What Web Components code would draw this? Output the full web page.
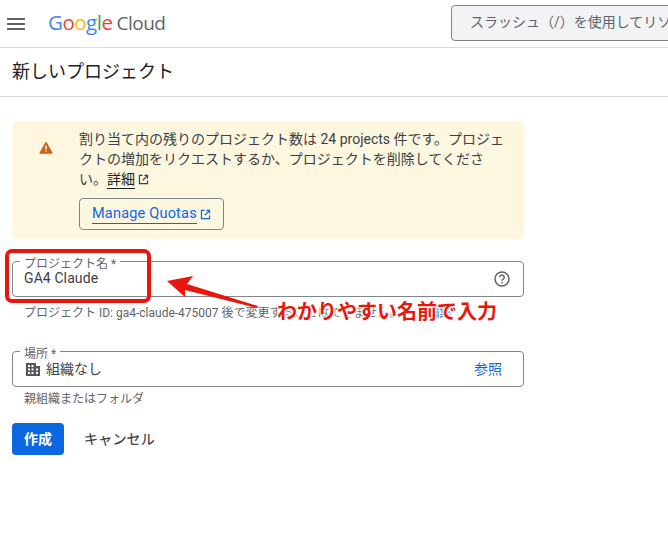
<!DOCTYPE html>
<html lang="ja">
<head>
<meta charset="utf-8">
<title>新しいプロジェクト</title>
<style>
  html, body { margin: 0; padding: 0; background: #fff; }
  body { width: 668px; height: 557px; overflow: hidden; position: relative; font-family: Roboto, "Noto Sans CJK JP", sans-serif; }
</style>
</head>
<body>
<gc-header></gc-header>
<gc-title>新しいプロジェクト</gc-title>
<gc-form>
  <gc-banner></gc-banner>
  <gc-field label="プロジェクト名 *" value="GA4 Claude" helper="プロジェクト ID: ga4-claude-475007 後で変更することはできません。" link="編集" kind="help"></gc-field>
  <gc-field label="場所 *" value="組織なし" helper="親組織またはフォルダ" kind="browse"></gc-field>
  <gc-actions></gc-actions>
</gc-form>
<gc-annotation></gc-annotation>

<script>
// 上部バー
class GcHeader extends HTMLElement {
  constructor() {
    super();
    this.attachShadow({ mode: 'open' });
    this.shadowRoot.innerHTML = `
      <style>
        :host { display: flex; align-items: center; height: 47px; border-bottom: 1px solid #dadce0; overflow: hidden; }
        .menu { flex: 0 0 18px; height: 12px; margin-left: 7px; display: flex; flex-direction: column; justify-content: space-between; }
        .menu i { display: block; height: 2px; background: #5f6368; }
        .logo { margin: 0 0 3px 23px; width: 403px; font: 500 20.5px/24px "Open Sans", sans-serif; letter-spacing: -.5px; white-space: nowrap; }
        .logo .cloud { font: 400 19px/24px "Open Sans", sans-serif; color: #5f6368; letter-spacing: -.5px; margin-left: 4px; }
        .search { flex: 0 0 auto; width: 300px; height: 36px; margin: 0 -90px 1px 0; box-sizing: border-box; border: 1px solid #80868b; border-radius: 4px 0 0 4px; background: #f1f3f4; padding-left: 18px; font: 14px/33px Roboto, "Noto Sans CJK JP", sans-serif; color: #5f6368; white-space: nowrap; }
      </style>
      <div class="menu"><i></i><i></i><i></i></div>
      <div class="logo"><span style="color:#4285f4">G</span><span style="color:#ea4335">o</span><span style="color:#fbbc04">o</span><span style="color:#4285f4">g</span><span style="color:#34a853">l</span><span style="color:#ea4335">e</span><span class="cloud">Cloud</span></div>
      <div class="search">スラッシュ（/）を使用してリソース</div>
    `;
  }
}
customElements.define('gc-header', GcHeader);

// ページタイトル
class GcTitle extends HTMLElement {
  constructor() {
    super();
    this.attachShadow({ mode: 'open' });
    this.shadowRoot.innerHTML = `
      <style>
        :host { display: block; height: 49px; box-sizing: border-box; padding-left: 12px; border-bottom: 1px solid #dadce0; font: 400 18px/47px Roboto, "Noto Sans CJK JP", sans-serif; color: #202124; }
      </style>
      <slot></slot>
    `;
  }
}
customElements.define('gc-title', GcTitle);

class GcForm extends HTMLElement {
  constructor() {
    super();
    this.attachShadow({ mode: 'open' });
    this.shadowRoot.innerHTML = `
      <style>
        :host { display: flex; flex-direction: column; width: 512px; margin-left: 12px; padding-top: 24px; }
      </style>
      <slot></slot>
    `;
  }
}
customElements.define('gc-form', GcForm);

const EXT_ICON = (color) => `<svg width="11" height="11" viewBox="0 0 12 12" fill="none" stroke="${color}" stroke-width="1.3"><path d="M5 1.6H1.6v8.8h8.8V7"/><path d="M7 1.6h3.4V5M10.2 1.8 5.2 6.8"/></svg>`;

// 割り当ての警告
class GcBanner extends HTMLElement {
  constructor() {
    super();
    this.attachShadow({ mode: 'open' });
    this.shadowRoot.innerHTML = `
      <style>
        :host { display: flex; height: 118px; box-sizing: border-box; background: #fef7e0; border-radius: 4px; padding: 8px 19px 0 27px; font: 14px/20px Roboto, "Noto Sans CJK JP", sans-serif; color: #3c4043; }
        .icon { flex: 0 0 14px; height: 13px; margin: 12px 26px 0 0; }
        .body { flex: 1; min-width: 0; }
        .link { color: #202124; border-bottom: 1px solid #202124; padding-bottom: 1px; }
        .text svg { vertical-align: -1px; margin-left: 3px; }
        .btn { display: inline-flex; align-items: center; gap: 3px; height: 32px; box-sizing: border-box; margin-top: 9px; padding: 0 12px; border: 1px solid #80868b; border-radius: 4px; font: 400 14.5px/20px Roboto, sans-serif; letter-spacing: .2px; color: #0b67e0; }
        .btn span { border-bottom: 1px solid #0b67e0; line-height: 18px; }
      </style>
      <svg class="icon" viewBox="0 0 14 13"><path d="M7 1 13.2 12.2H.8Z" fill="#c5651b" stroke="#c5651b" stroke-width="1" stroke-linejoin="round"/><path d="M6.3 4.6h1.4v4H6.3zM6.3 9.4h1.4v1.4H6.3z" fill="#fef7e0"/></svg>
      <div class="body">
        <div class="text">割り当て内の残りのプロジェクト数は 24 projects 件です。プロジェクトの増加をリクエストするか、プロジェクトを削除してください。<span class="link">詳細</span>${EXT_ICON('#3c4043')}</div>
        <div class="btn"><span>Manage Quotas</span>${EXT_ICON('#0b67e0')}</div>
      </div>
    `;
  }
}
customElements.define('gc-banner', GcBanner);

// 輪郭付きの入力欄
class GcField extends HTMLElement {
  constructor() {
    super();
    this.attachShadow({ mode: 'open' });
  }
  connectedCallback() {
    const kind = this.getAttribute('kind');
    const building = `<svg width="14" height="13" viewBox="0 0 14 13" fill="#54585c"><path fill-rule="evenodd" d="M0 0h10v3h4v10H0ZM2 2v2h2V2Zm3.500 0v2h2V2ZM2 5.500v2h2v-2Zm3.500 0v2h2v-2Zm4.500 0v2h2v-2ZM2 9v2h2V9Zm3.500 0v2h2V9Zm4.500 0v2h2V9Z"/></svg>`;
    const help = `<svg width="16" height="16" viewBox="0 0 16 16" fill="none" stroke="#5f6368" stroke-width="1.5"><circle cx="8" cy="8" r="7"/><path d="M5.8 6.300a2.200 2.200 0 1 1 3.400 1.800c-.8.5-1.200 1-1.200 1.700"/><path d="M8 11v1.500"/></svg>`;
    this.shadowRoot.innerHTML = `
      <style>
        :host { display: block; margin-top: 22px; }
        :host([kind="browse"]) { margin-top: 30px; }
        .box { position: relative; display: flex; align-items: center; height: 36px; box-sizing: border-box; border: 1px solid #80868b; border-radius: 4px; padding: 0 13px 0 11px; font: 14px/20px Roboto, "Noto Sans CJK JP", sans-serif; color: #3c4043; }
        :host([kind="help"]) .val { margin-top: -2px; letter-spacing: .1px; }
        :host([kind="browse"]) .box { padding-left: 13px; }
        .box svg { flex: none; }
        .val { flex: 1; }
        :host([kind="browse"]) .val { margin-left: 6px; }
        .label { position: absolute; left: 7px; top: -4px; padding: 0 4px; background: #fff; font: 12px/12px Roboto, "Noto Sans CJK JP", sans-serif; color: #5f6368; }
        .browse { color: #0b67e0; font-size: 14px; margin-right: 8px; }
        .helper { padding: 8px 0 0 12px; height: 16px; font: 12px/16px Roboto, "Noto Sans CJK JP", sans-serif; color: #5f6368; white-space: nowrap; }
        :host([kind="browse"]) .helper { padding-top: 4px; }
        .helper a { color: #0b67e0; margin-left: 26px; }
      </style>
      <div class="box">
        <span class="label">${this.getAttribute('label')}</span>
        ${kind === 'browse' ? building : ''}
        <span class="val">${this.getAttribute('value')}</span>
        ${kind === 'help' ? help : '<span class="browse">参照</span>'}
      </div>
      <div class="helper">${this.getAttribute('helper')}${this.hasAttribute('link') ? `<a>${this.getAttribute('link')}</a>` : ''}</div>
    `;
  }
}
customElements.define('gc-field', GcField);

class GcActions extends HTMLElement {
  constructor() {
    super();
    this.attachShadow({ mode: 'open' });
    this.shadowRoot.innerHTML = `
      <style>
        :host { display: flex; align-items: center; gap: 20px; margin-top: 16px; font: 14px/20px Roboto, "Noto Sans CJK JP", sans-serif; }
        .create { width: 52px; height: 32px; line-height: 32px; text-align: center; background: #0b67e0; color: #fff; border-radius: 4px; font-weight: 700; }
        .cancel { color: #3c4043; letter-spacing: .2px; -webkit-text-stroke: .2px #3c4043; }
      </style>
      <div class="create">作成</div>
      <div class="cancel">キャンセル</div>
    `;
  }
}
customElements.define('gc-actions', GcActions);

// スクリーンショットに重ねた赤い注釈
class GcAnnotation extends HTMLElement {
  constructor() {
    super();
    this.attachShadow({ mode: 'open' });
    this.shadowRoot.innerHTML = `
      <style>
        :host { display: block; position: absolute; inset: 0; pointer-events: none; }
        .ring { position: absolute; left: 5px; top: 249px; width: 146px; height: 54px; box-sizing: border-box; border: 4px solid #e8160c; border-radius: 7px; }
        svg { position: absolute; left: 0; top: 0; }
        .note { position: absolute; left: 277px; top: 299px; font: 700 20px/24px "Noto Sans CJK JP", sans-serif; color: #e8160c; white-space: nowrap; text-shadow: 0 0 2px #fff, 0 0 2px #fff, 0 0 3px #fff, 0 0 3px #fff, 0 0 4px #fff; }
      </style>
      <div class="ring"></div>
      <svg width="668" height="557"><path d="M167 281 193 276 187 284 258 306 257 308 185 290 185 297Z" fill="#e8160c"/></svg>
      <div class="note">わかりやすい名前で入力</div>
    `;
  }
}
customElements.define('gc-annotation', GcAnnotation);
</script>
</body>
</html>
